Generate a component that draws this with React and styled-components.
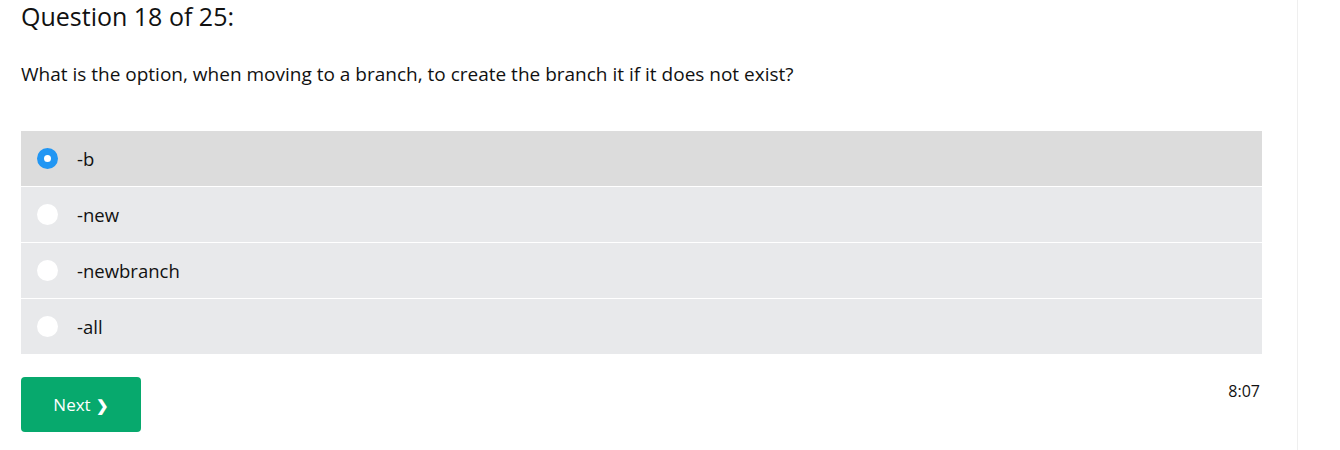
import React, {useState} from "react";
import styled, {createGlobalStyle} from "styled-components";

const GlobalStyle = createGlobalStyle`
  body {
    margin: 0;
    background: #ffffff;
    font-family: "Open Sans", "Noto Sans", sans-serif;
    color: #111111;
  }
`;

const options = ["-b", "-new", "-newbranch", "-all"];

const App = () => {
    const [selected, setSelected] = useState(0);

    return <Page>
        <GlobalStyle/>
        <Quiz>
            <Heading>Question 18 of 25:</Heading>
            <QuestionText>What is the option, when moving to a branch, to create the branch it if it does not exist?</QuestionText>
            <OptionList>
                {options.map((opt, i) => (
                    <Option key={opt} $active={selected === i} onClick={() => setSelected(i)}>
                        <Radio $checked={selected === i}/>
                        <OptionLabel>{opt}</OptionLabel>
                    </Option>
                ))}
            </OptionList>
            <Footer>
                <NextButton>Next <Chevron>❯</Chevron></NextButton>
                <Timer>8:07</Timer>
            </Footer>
        </Quiz>
    </Page>
}

const Page = styled.div`
    width: 1340px;
    height: 450px;
    display: flex;
`;

const Quiz = styled.div`
    width: 1241px;
    padding: 0 35px 0 21px;
    border-right: 1px solid #efefef;
    display: flex;
    flex-direction: column;
`;

const Heading = styled.h2`
    margin: 0;
    font-size: 25px;
    font-weight: 400;
    line-height: 32px;
    color: #111;
`;

const QuestionText = styled.p`
    margin: 29px 0 0;
    font-size: 19px;
    line-height: 26px;
`;

const OptionList = styled.div`
    margin-top: 44px;
    display: flex;
    flex-direction: column;
    gap: 1px;
`;

const Option = styled.div`
    height: 55px;
    display: flex;
    align-items: center;
    padding-left: 16px;
    background: ${p => p.$active ? "#dcdcdc" : "#e8e9eb"};
    cursor: pointer;
`;

const Radio = styled.span`
    width: ${p => p.$checked ? "7px" : "21px"};
    height: ${p => p.$checked ? "7px" : "21px"};
    border-radius: 50%;
    background: #ffffff;
    border: ${p => p.$checked ? "7px solid #2196f3" : "none"};
    flex-shrink: 0;
`;

const OptionLabel = styled.span`
    margin-left: 19px;
    font-size: 18.5px;
    line-height: 24px;
`;

const Footer = styled.div`
    margin-top: 23px;
    display: flex;
    justify-content: space-between;
    align-items: flex-start;
`;

const NextButton = styled.button`
    width: 120px;
    height: 55px;
    background: #07a96d;
    border: none;
    border-radius: 4px;
    color: #ffffff;
    font-family: "Open Sans", "Noto Sans", sans-serif;
    font-size: 17px;
    display: flex;
    align-items: center;
    justify-content: center;
    gap: 5px;
    cursor: pointer;
`;

const Chevron = styled.span`
    font-size: 15px;
    font-weight: 700;
`;

const Timer = styled.span`
    margin: 3px 2px 0 0;
    font-size: 16px;
    line-height: 22px;
`;

export default App
